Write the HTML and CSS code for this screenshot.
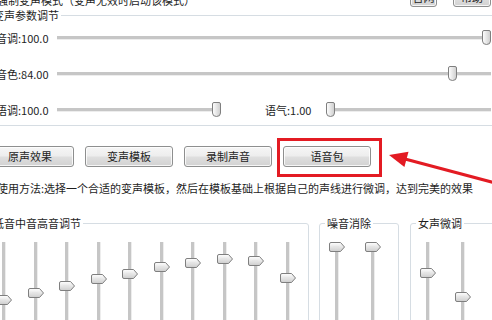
FILE: index.html
```html
<!DOCTYPE html>
<html lang="zh-CN">
<head>
    <meta charset="UTF-8">
    <meta name="viewport" content="width=device-width, initial-scale=1.0">
    <title>变声器</title>
    <link rel="stylesheet" href="styles.css">
</head>
<body>
    <svg class="defs" width="0" height="0" aria-hidden="true">
        <defs>
            <linearGradient id="vfill" x1="0" y1="0" x2="0" y2="1">
                <stop offset="0" stop-color="#ffffff"/>
                <stop offset="1" stop-color="#cdcdcd"/>
            </linearGradient>
            <linearGradient id="hfill" x1="0" y1="0" x2="1" y2="0">
                <stop offset="0" stop-color="#ffffff"/>
                <stop offset="1" stop-color="#cdcdcd"/>
            </linearGradient>
            <symbol id="vthumb" viewBox="0 0 16 10">
                <path d="M2 0.5H11.5L15.5 5L11.5 9.5H2Q0.5 9.5 0.5 8V2Q0.5 0.5 2 0.5Z" fill="url(#vfill)" stroke="#7f7f7f"/>
                <path d="M4 5H10" stroke="#e2e2e2"/>
            </symbol>
            <symbol id="hthumb" viewBox="0 0 9 15">
                <path d="M2 0.5H7Q8.5 0.5 8.5 2V11Q8.5 14.5 4.5 14.5Q0.5 14.5 0.5 11V2Q0.5 0.5 2 0.5Z" fill="url(#hfill)" stroke="#7f7f7f"/>
            </symbol>
        </defs>
    </svg>

    <div class="app">
        <div class="top">
            <span class="mode">强制变声模式（变声无效时启动该模式）</span>
            <div class="top-btns">
                <button class="btn btn-site">官网</button>
                <button class="btn btn-help">帮助</button>
            </div>
        </div>

        <fieldset class="group params">
            <legend>变声参数调节</legend>
            <div class="rows">
                <div class="row">
                    <span class="label">音调:100.0</span>
                    <div class="hslider"><svg class="hthumb" style="--v: 1"><use href="#hthumb"/></svg></div>
                </div>
                <div class="row">
                    <span class="label">音色:84.00</span>
                    <div class="hslider"><svg class="hthumb" style="--v: 0.92"><use href="#hthumb"/></svg></div>
                </div>
                <div class="row">
                    <span class="label">语调:100.0</span>
                    <div class="hslider short"><svg class="hthumb" style="--v: 1"><use href="#hthumb"/></svg></div>
                    <span class="label gap">语气:1.00</span>
                    <div class="hslider"><svg class="hthumb" style="--v: 0"><use href="#hthumb"/></svg></div>
                </div>
            </div>
        </fieldset>

        <div class="actions">
            <button class="btn">原声效果</button>
            <button class="btn">变声模板</button>
            <button class="btn">录制声音</button>
            <span class="highlight"><button class="btn">语音包</button></span>
        </div>

        <p class="usage">使用方法:选择一个合适的变声模板，然后在模板基础上根据自己的声线进行微调，达到完美的效果</p>

        <div class="eq">
            <fieldset class="group bands">
                <legend>低音中音高音调节</legend>
                <div class="vsliders">
                    <div class="vslider"><svg class="vthumb" style="top: 53px"><use href="#vthumb"/></svg></div>
                    <div class="vslider"><svg class="vthumb" style="top: 46px"><use href="#vthumb"/></svg></div>
                    <div class="vslider"><svg class="vthumb" style="top: 39px"><use href="#vthumb"/></svg></div>
                    <div class="vslider"><svg class="vthumb" style="top: 32px"><use href="#vthumb"/></svg></div>
                    <div class="vslider"><svg class="vthumb" style="top: 27px"><use href="#vthumb"/></svg></div>
                    <div class="vslider"><svg class="vthumb" style="top: 20px"><use href="#vthumb"/></svg></div>
                    <div class="vslider"><svg class="vthumb" style="top: 16px"><use href="#vthumb"/></svg></div>
                    <div class="vslider"><svg class="vthumb" style="top: 12px"><use href="#vthumb"/></svg></div>
                    <div class="vslider"><svg class="vthumb" style="top: 14px"><use href="#vthumb"/></svg></div>
                    <div class="vslider"><svg class="vthumb" style="top: 31px"><use href="#vthumb"/></svg></div>
                </div>
            </fieldset>
            <fieldset class="group noise">
                <legend>噪音消除</legend>
                <div class="vsliders">
                    <div class="vslider"><svg class="vthumb" style="top: 0px"><use href="#vthumb"/></svg></div>
                    <div class="vslider"><svg class="vthumb" style="top: 0px"><use href="#vthumb"/></svg></div>
                </div>
            </fieldset>
            <fieldset class="group female">
                <legend>女声微调</legend>
                <div class="vsliders">
                    <div class="vslider"><svg class="vthumb" style="top: 26px"><use href="#vthumb"/></svg></div>
                    <div class="vslider"><svg class="vthumb" style="top: 50px"><use href="#vthumb"/></svg></div>
                </div>
            </fieldset>
        </div>
    </div>

    <!-- annotation arrow pointing at the voice pack button -->
    <svg class="arrow" viewBox="0 0 492 320" aria-hidden="true">
        <line x1="500" y1="184.2" x2="405" y2="159" stroke="#e31b23" stroke-width="3"/>
        <polygon points="389,155 408.5,151.7 404.4,167.1" fill="#e31b23"/>
    </svg>
</body>
</html>
```

FILE: styles.css
```css
* {
    box-sizing: border-box;
}

body {
    margin: 0;
    width: 492px;
    height: 320px;
    overflow: hidden;
    position: relative;
    background-color: #fff;
    font-family: "Noto Sans CJK SC", "Noto Sans", sans-serif;
    font-size: 11px;
    color: #1e1e1e;
}

.defs {
    position: absolute;
    width: 0;
    height: 0;
}

.app {
    margin-left: -18px;
    width: 510px;
}

.btn {
    font: inherit;
    color: #1e1e1e;
    width: 88px;
    height: 21px;
    padding: 0;
    line-height: 19px;
    border: 1px solid #8e8f8f;
    border-radius: 3px;
    background: linear-gradient(#f6f6f6 0%, #ededed 48%, #dfdfdf 52%, #d2d2d2 100%);
    box-shadow: inset 0 0 0 1px rgba(255, 255, 255, 0.8);
}

/* top strip, mostly cut off */
.top {
    display: flex;
    align-items: flex-end;
    height: 20px;
    margin-top: -13px;
    padding-left: 15px;
    padding-right: 1px;
}

.mode {
    line-height: 14px;
    white-space: nowrap;
}

.top-btns {
    flex: none;
    margin-left: auto;
    display: flex;
    gap: 16px;
}

.top-btns .btn {
    flex: none;
    height: 20px;
}

.top-btns .btn-site {
    width: 27px;
}

.top-btns .btn-help {
    width: 38px;
}

/* group boxes */
.group {
    flex: none;
    margin: 0;
    padding: 0;
    min-width: 0;
    border: 1px solid #d6dde3;
    border-radius: 3px;
}

.group legend {
    margin-left: 5px;
    padding: 0 2px;
    line-height: 12px;
    white-space: nowrap;
}

.params legend,
.bands legend {
    margin-left: 8px;
}

.params {
    margin-top: 2px;
    width: calc(100% + 10px);
}

.rows {
    margin: -1px 0 -3px;
    padding: 0 10px 0 13px;
}

.row {
    display: flex;
    align-items: center;
    height: 36px;
}

.label {
    flex: none;
    width: 61px;
    line-height: 14px;
    white-space: nowrap;
}

.label.gap {
    margin-left: 44px;
}

.hslider {
    position: relative;
    flex: 1;
    height: 16px;
}

.hslider::before {
    content: "";
    position: absolute;
    left: 0;
    right: 0;
    top: 6px;
    height: 3px;
    background: #c6c6c6;
    border-bottom: 1px solid #ededed;
}

.hslider.short {
    flex: none;
    width: 164px;
}

.hthumb {
    position: absolute;
    top: 0;
    width: 9px;
    height: 15px;
    left: calc(var(--v) * (100% - 9px));
}

/* buttons */
.actions {
    display: flex;
    gap: 11px;
    margin-top: 20px;
    padding-left: 4px;
}

.highlight {
    position: relative;
    display: flex;
}

.highlight::after {
    content: "";
    position: absolute;
    left: -6px;
    right: -11px;
    top: -8px;
    bottom: -10px;
    border: 3px solid #e31b23;
}

.usage {
    margin: 14px 0 0;
    padding-left: 15px;
    line-height: 14px;
    white-space: nowrap;
}

/* equalizer groups */
.eq {
    display: flex;
    align-items: flex-start;
    margin-top: 22px;
}

.bands,
.noise,
.female {
    height: 130px;
    padding-top: 13px;
}

.bands {
    width: 327px;
}

.noise {
    margin-left: 10px;
    width: 80px;
}

.female {
    margin-left: 11px;
    width: 110px;
}

.vsliders {
    display: flex;
    gap: 15.5px;
    padding-left: 13px;
}

.noise .vsliders {
    gap: 20px;
    padding-left: 9px;
}

.female .vsliders {
    gap: 19px;
    padding-left: 9px;
}

.vslider {
    position: relative;
    flex: none;
    width: 16px;
    height: 90px;
}

.vslider::before {
    content: "";
    position: absolute;
    left: 6px;
    top: 0;
    bottom: 0;
    width: 3px;
    background: #c6c6c6;
    border-right: 1px solid #ededed;
}

.vthumb {
    position: absolute;
    left: 0;
    width: 16px;
    height: 10px;
}

.arrow {
    position: absolute;
    left: 0;
    top: 0;
    width: 492px;
    height: 320px;
    pointer-events: none;
}
```
